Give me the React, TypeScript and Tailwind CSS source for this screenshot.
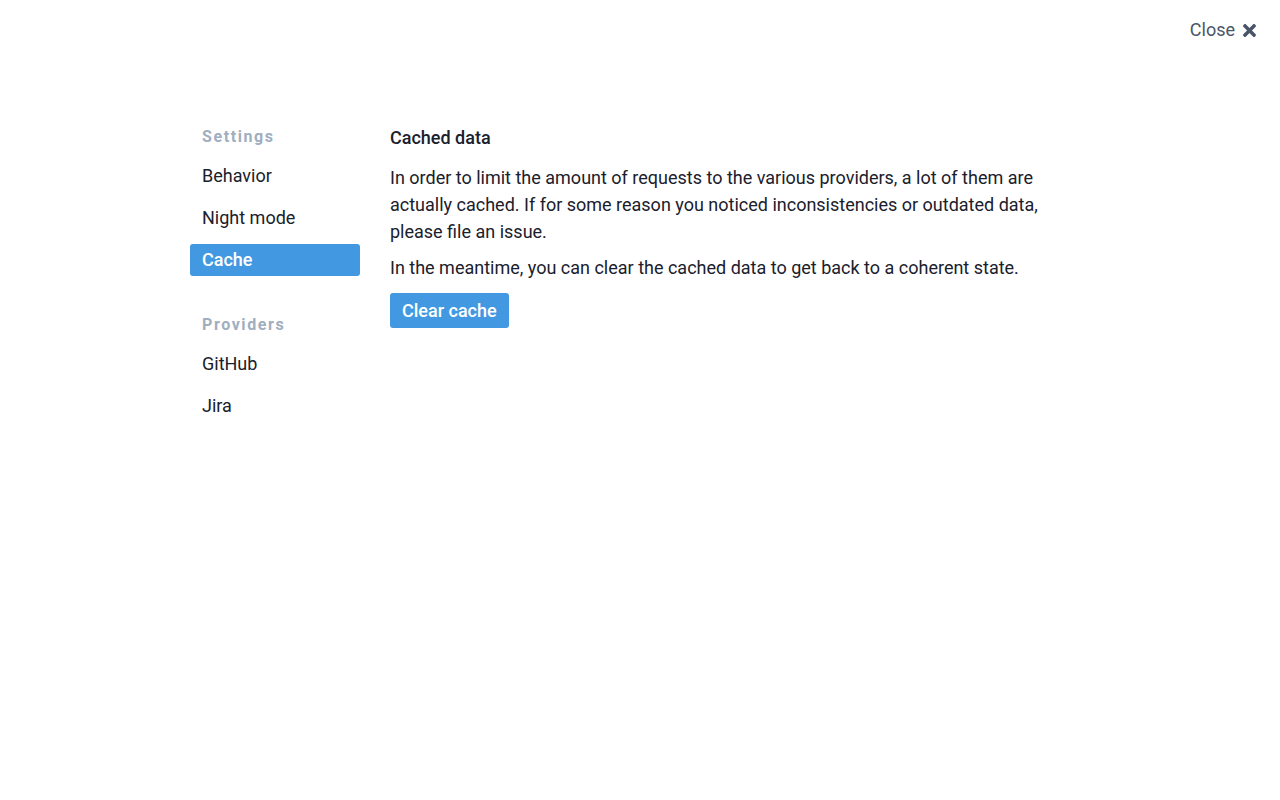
import { FaTimes } from "react-icons/fa"

const settingsItems = ["Behavior", "Night mode", "Cache"]
const providerItems = ["GitHub", "Jira"]

function NavItem({ label, active }: { label: string; active?: boolean }) {
  return (
    <a
      href="#"
      className={
        "block h-8 px-3 rounded-[3px] text-[18px] leading-8 " +
        (active ? "bg-[#4299e1] text-white font-medium" : "text-[#1a202c]")
      }
    >
      {label}
    </a>
  )
}

export default function App() {
  return (
    <div
      className="min-h-screen bg-white text-[#1a202c]"
      style={{ fontFamily: "Roboto, 'Liberation Sans', sans-serif" }}
    >
      <header className="flex justify-end px-6 pt-[18px]">
        <button className="flex items-center gap-2 text-[18px] leading-6 text-[#4a5568]">
          Close
          <FaTimes className="w-[13px] h-[19px]" />
        </button>
      </header>

      <div className="mx-auto mt-[82px] flex w-[900px]">
        {/* sidebar */}
        <nav className="w-[170px] shrink-0">
          <h3 className="px-3 pt-px mb-[11px] text-[16px] leading-6 font-bold tracking-widest text-[#a0aec0]">
            Settings
          </h3>
          <div className="flex flex-col gap-[10px]">
            {settingsItems.map((item) => (
              <NavItem key={item} label={item} active={item === "Cache"} />
            ))}
          </div>

          <h3 className="px-3 mt-[37px] mb-[11px] text-[16px] leading-6 font-bold tracking-widest text-[#a0aec0]">
            Providers
          </h3>
          <div className="flex flex-col gap-[10px]">
            {providerItems.map((item) => (
              <NavItem key={item} label={item} />
            ))}
          </div>
        </nav>

        {/* content */}
        <main className="ml-[30px] flex-1 text-[18px] leading-[27px]">
          <h2 className="font-medium mb-[13px]">Cached data</h2>
          <p>
            In order to limit the amount of requests to the various providers, a lot of them are
            actually cached. If for some reason you noticed inconsistencies or outdated data,
            please file an issue.
          </p>
          <p className="mt-[9px]">
            In the meantime, you can clear the cached data to get back to a coherent state.
          </p>
          <button className="mt-3 h-[35px] px-3 rounded-[3px] bg-[#4299e1] text-white font-medium text-[18px]">
            Clear cache
          </button>
        </main>
      </div>
    </div>
  )
}
